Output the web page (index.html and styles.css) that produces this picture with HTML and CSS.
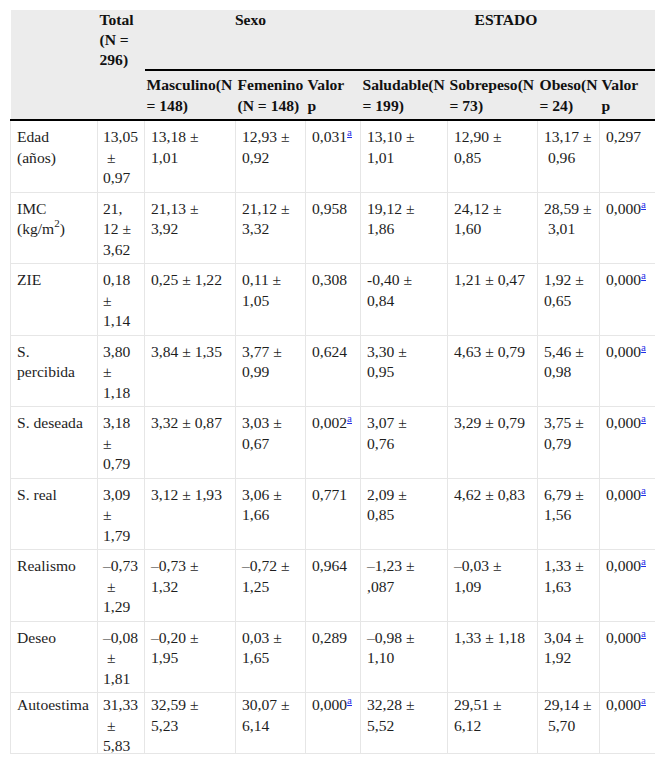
FILE: index.html
```html
<!DOCTYPE html>
<html lang="es">
<head>
<meta charset="utf-8">
<title>Tabla</title>
<link rel="stylesheet" href="styles.css">
</head>
<body>
<div class="wrap">
<table class="tbl">
<colgroup>
<col class="c1"><col class="c2"><col class="c3"><col class="c4"><col class="c5"><col class="c6"><col class="c7"><col class="c8"><col class="c9">
</colgroup>
<thead>
<tr class="h1">
<th></th>
<th>Total (N = 296)</th>
<th colspan="3" class="grp">Sexo</th>
<th colspan="4" class="grp">ESTADO</th>
</tr>
<tr class="h2">
<th></th>
<th></th>
<th>Masculino(N = 148)</th>
<th>Femenino (N = 148)</th>
<th>Valor p</th>
<th>Saludable(N = 199)</th>
<th>Sobrepeso(N = 73)</th>
<th>Obeso(N = 24)</th>
<th>Valor p</th>
</tr>
</thead>
<tbody>
<tr>
<td>Edad (años)</td>
<td>13,05 &nbsp;± 0,97</td>
<td>13,18 ± 1,01</td>
<td>12,93 ± 0,92</td>
<td>0,031<sup><a href="#fn">a</a></sup></td>
<td>13,10 ± 1,01</td>
<td>12,90 ± 0,85</td>
<td>13,17 ± &nbsp;0,96</td>
<td>0,297</td>
</tr>
<tr>
<td>IMC (kg/m<sup class="pw">2</sup>)</td>
<td>21, 12 ± 3,62</td>
<td>21,13 ± 3,92</td>
<td>21,12 ± 3,32</td>
<td>0,958</td>
<td>19,12 ± 1,86</td>
<td>24,12 ± 1,60</td>
<td>28,59 ± &nbsp;3,01</td>
<td>0,000<sup><a href="#fn">a</a></sup></td>
</tr>
<tr>
<td>ZIE</td>
<td>0,18 ± 1,14</td>
<td>0,25 ± 1,22</td>
<td>0,11 ± 1,05</td>
<td>0,308</td>
<td>-0,40 ± 0,84</td>
<td>1,21 ± 0,47</td>
<td>1,92 ± 0,65</td>
<td>0,000<sup><a href="#fn">a</a></sup></td>
</tr>
<tr>
<td>S. percibida</td>
<td>3,80 ± 1,18</td>
<td>3,84 ± 1,35</td>
<td>3,77 ± 0,99</td>
<td>0,624</td>
<td>3,30 ± 0,95</td>
<td>4,63 ± 0,79</td>
<td>5,46 ± 0,98</td>
<td>0,000<sup><a href="#fn">a</a></sup></td>
</tr>
<tr>
<td>S. deseada</td>
<td>3,18 ± 0,79</td>
<td>3,32 ± 0,87</td>
<td>3,03 ± 0,67</td>
<td>0,002<sup><a href="#fn">a</a></sup></td>
<td>3,07 ± 0,76</td>
<td>3,29 ± 0,79</td>
<td>3,75 ± 0,79</td>
<td>0,000<sup><a href="#fn">a</a></sup></td>
</tr>
<tr>
<td>S. real</td>
<td>3,09 ± 1,79</td>
<td>3,12 ± 1,93</td>
<td>3,06 ± 1,66</td>
<td>0,771</td>
<td>2,09 ± 0,85</td>
<td>4,62 ± 0,83</td>
<td>6,79 ± 1,56</td>
<td>0,000<sup><a href="#fn">a</a></sup></td>
</tr>
<tr>
<td>Realismo</td>
<td>–0,73 &nbsp;± 1,29</td>
<td>–0,73 ± 1,32</td>
<td>–0,72 ± 1,25</td>
<td>0,964</td>
<td>–1,23 ± ,087</td>
<td>–0,03 ± 1,09</td>
<td>1,33 ± 1,63</td>
<td>0,000<sup><a href="#fn">a</a></sup></td>
</tr>
<tr>
<td>Deseo</td>
<td>–0,08 &nbsp;± 1,81</td>
<td>–0,20 ± 1,95</td>
<td>0,03 ± 1,65</td>
<td>0,289</td>
<td>–0,98 ± 1,10</td>
<td>1,33 ± 1,18</td>
<td>3,04 ± 1,92</td>
<td>0,000<sup><a href="#fn">a</a></sup></td>
</tr>
<tr>
<td>Autoestima</td>
<td>31,33 &nbsp;± 5,83</td>
<td>32,59 ± 5,23</td>
<td>30,07 ± 6,14</td>
<td>0,000<sup><a href="#fn">a</a></sup></td>
<td>32,28 ± 5,52</td>
<td>29,51 ± 6,12</td>
<td>29,14 ± &nbsp;5,70</td>
<td>0,000<sup><a href="#fn">a</a></sup></td>
</tr>
</tbody>
</table>
</div>
</body>
</html>
```
FILE: styles.css
```css
html, body {
  margin: 0;
  padding: 0;
  background: #fff;
}

.wrap {
  margin: 10px 0 0 10px;
  width: 645px;
  height: 743px;
  overflow: hidden;
  border-bottom: 1px solid #e6e6e6;
  box-sizing: content-box;
}

.tbl {
  border-collapse: collapse;
  table-layout: fixed;
  width: 645px;
  font-family: "Liberation Serif", "Times New Roman", serif;
  font-size: 15.6px;
  line-height: 20.5px;
  color: #1e1e1e;
}

.c1 { width: 87px; }
.c2 { width: 47px; }
.c3 { width: 91px; }
.c4 { width: 70px; }
.c5 { width: 55px; }
.c6 { width: 87px; }
.c7 { width: 90px; }
.c8 { width: 62px; }
.c9 { width: 56px; }

.tbl thead th {
  background: #ececec;
  font-weight: bold;
  text-align: left;
  vertical-align: top;
  color: #111;
}

.h1 th {
  padding: 0 6px 0 2px;
  line-height: 20px;
}

.h1 th.grp {
  text-align: center;
  border-bottom: 2px solid #000;
}

.h2 th {
  padding: 4px 6px 3px 2px;
  border-bottom: 2px solid #000;
}

.h2 th:last-child {
  padding-right: 10px;
}

.tbl tbody td {
  vertical-align: top;
  padding: 6px 6px 3px 6px;
  border: 1px solid #e6e6e6;
}

.tbl tbody tr:last-child td {
  padding-top: 2px;
}

.tbl tbody td:nth-child(1) { padding-right: 8px; }
.tbl tbody td:nth-child(2) { padding-left: 5px; padding-right: 5px; }
.tbl tbody td:nth-child(3) { padding-right: 7px; }
.tbl tbody td:nth-child(6) { padding-right: 12px; }

.tbl sup {
  font-size: 11px;
  line-height: 0;
  vertical-align: 6px;
}

.tbl sup a {
  color: #1f2ee6;
  text-decoration: underline;
}

.tbl sup.pw {
  vertical-align: 7px;
}
```
